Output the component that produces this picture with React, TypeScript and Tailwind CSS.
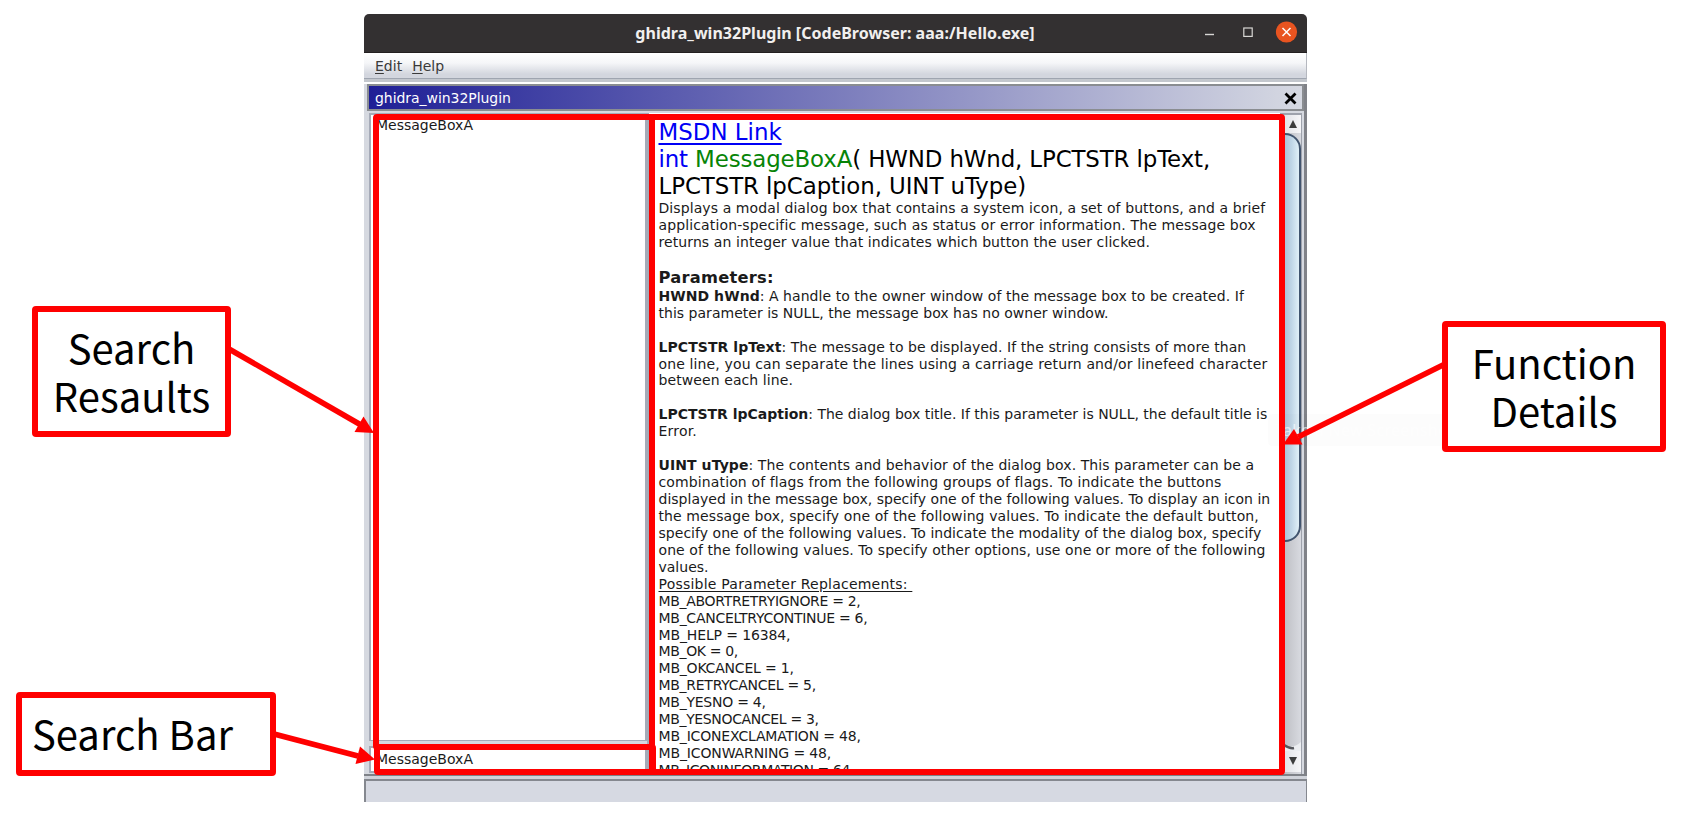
import type { ReactNode } from "react";

const constants = [
  { text: "MB_ABORTRETRYIGNORE = 2,", tracking: "tracking-[-0.31px]" },
  { text: "MB_CANCELTRYCONTINUE = 6,", tracking: "tracking-[-0.27px]" },
  { text: "MB_HELP = 16384,", tracking: "tracking-[-0.13px]" },
  { text: "MB_OK = 0,", tracking: "tracking-[-0.35px]" },
  { text: "MB_OKCANCEL = 1,", tracking: "tracking-[-0.2px]" },
  { text: "MB_RETRYCANCEL = 5,", tracking: "tracking-[-0.28px]" },
  { text: "MB_YESNO = 4,", tracking: "tracking-[-0.25px]" },
  { text: "MB_YESNOCANCEL = 3,", tracking: "tracking-[-0.35px]" },
  { text: "MB_ICONEXCLAMATION = 48,", tracking: "tracking-[-0.18px]" },
  { text: "MB_ICONWARNING = 48,", tracking: "tracking-[-0.13px]" },
  { text: "MB_ICONINFORMATION = 64,", tracking: "tracking-[-0.4px]" },
];

function Callout({ className, children }: { className: string; children: ReactNode }) {
  return (
    <div
      className={
        "relative z-10 flex shrink-0 items-center rounded-[4px] border-[6px] border-[#ff0000] bg-white font-['Noto_Sans_CJK_SC','Noto_Sans',sans-serif] text-[40px] leading-[48px] text-black " +
        className
      }
    >
      {children}
    </div>
  );
}

function Arrows() {
  return (
    <svg className="pointer-events-none absolute left-0 top-0 z-20 h-[818px] w-[1681px]" viewBox="0 0 1681 818">
      <g stroke="#f00" strokeWidth="5.6" fill="none">
        <path d="M229 349L361 425" />
        <path d="M274 734L358 756" />
        <path d="M1445 364L1298 437" />
      </g>
      <g fill="#f00">
        <path d="M374 433L354.500 432L363.500 416.500Z" />
        <path d="M375 759.500L355.500 764L360 746.500Z" />
        <path d="M1283 444.500L1294 429L1302.500 444.500Z" />
      </g>
    </svg>
  );
}

function Line({ children, className = "" }: { children?: ReactNode; className?: string }) {
  return <div className={"h-[16.95px] whitespace-pre " + className}>{children}</div>;
}

export default function App() {
  return (
    <div className="relative flex h-[818px] w-[1681px] overflow-hidden bg-white font-['DejaVu_Sans',sans-serif]">
      <div className="flex w-[364px] shrink-0 flex-col">
        <Callout className="ml-8 mt-[306px] h-[131px] w-[199px] justify-center pb-[1px] text-center">
          Search
          <br />
          Resaults
        </Callout>
        <Callout className="ml-4 mt-[255px] h-[84px] w-[260px] pb-[3px] pl-[10px]">Search Bar</Callout>
      </div>

      <div className="mt-[14px] flex h-[788px] w-[943px] shrink-0 flex-col">
        <div className="relative flex h-[39px] shrink-0 items-center justify-center rounded-t-[5px] border-b border-[#231f20] bg-[#333031]">
          <span className="whitespace-nowrap pr-[1px] font-['Noto_Sans',sans-serif] text-[16px] font-bold tracking-[0.02px] text-[#f1efee]">
            ghidra_win32Plugin [CodeBrowser: aaa:/Hello.exe]
          </span>
          <svg className="absolute right-0 top-0 h-[38px] w-[123px]" viewBox="1184 14 123 38">
            <path d="M1205 34.500H1214" stroke="#d8d6d4" strokeWidth="1.400" />
            <rect x="1243.800" y="28" width="8.400" height="8.400" fill="none" stroke="#d8d6d4" strokeWidth="1.200" />
            <circle cx="1286.500" cy="32" r="10.600" fill="#e95420" />
            <path d="M1282.500 28L1290.500 36M1290.500 28L1282.500 36" stroke="#fff" strokeWidth="1.500" />
          </svg>
        </div>

        <div className="flex h-[26px] shrink-0 items-center gap-[10px] border-b border-r border-b-[#9fa5b0] border-r-[#b5b8bf] bg-linear-to-b from-white via-[#f5f6f8] via-40% to-[#d3d6de] to-85% pl-[11px] pt-[1px] text-[14px] text-[#3a3a3a]">
          <span><u className="underline-offset-2">E</u>dit</span>
          <span><u className="underline-offset-2">H</u>elp</span>
        </div>
        <div className="h-[3px] shrink-0 bg-[#c3c7cd]" />
        <div className="h-[2px] shrink-0 bg-white" />

        <div className="flex h-[692px] shrink-0 flex-col border-b-2 border-r-[3px] border-b-[#7f8288] border-r-[#808288] bg-[#d6d9e0] pl-[3px]">
          <div className="flex h-[27px] shrink-0 items-center justify-between border-2 border-[#8a8d91] bg-linear-to-r/srgb from-[#1f1f96] to-[#d6d9e2] pl-[6px] pr-[5px] pt-[1px] text-[14px] tracking-[-0.05px] text-white">
            <span>ghidra_win32Plugin</span>
            <svg className="h-[13px] w-[13px]" viewBox="0 0 13 13">
              <path d="M1.500 1.500L11.500 11.500M11.500 1.500L1.500 11.500" stroke="#000" strokeWidth="2.800" />
            </svg>
          </div>
          <div className="ml-[2px] mt-[2px] flex h-[661px] shrink-0 text-[14px] leading-[16.95px] text-[#1a1a1a]">
            <div className="flex w-[278px] shrink-0 flex-col">
              <div className="h-[628px] shrink-0 border-2 border-b border-[#a6abb8] bg-white pl-[5px] pt-[2px]">MessageBoxA</div>
              <div className="mt-[5px] h-[27px] shrink-0 border-2 border-[#a6abb8] bg-white pl-[5px] pt-[3px]">MessageBoxA</div>
            </div>
            <div className="h-[660px] w-[633px] shrink-0 overflow-hidden border-l-2 border-[#a6abb8] bg-white pl-[9.500px] pt-[6px]">
              <div className="text-[22.900px] leading-[27px] text-black">
                <div className="w-fit text-[#0000f5] underline decoration-[1.500px] underline-offset-[3px]">MSDN Link</div>
                <div className="whitespace-pre tracking-[-0.13px]">
                  <span className="text-[#0000f5]">int</span> <span className="text-[#078407]">MessageBoxA</span>( HWND hWnd, LPCTSTR lpText,
                </div>
                <div className="whitespace-pre tracking-[-0.08px]">LPCTSTR lpCaption, UINT uType)</div>
              </div>
              <Line className="tracking-[0.09px]">Displays a modal dialog box that contains a system icon, a set of buttons, and a brief</Line>
              <Line className="tracking-[0.13px]">application-specific message, such as status or error information. The message box</Line>
              <Line className="tracking-[0.09px]">returns an integer value that indicates which button the user clicked.</Line>
              <Line />
              <div className="h-[20px] text-[16.300px] font-bold leading-[20.500px] tracking-[0.25px]">Parameters:</div>
              <Line className="tracking-[0.05px]"><b>HWND hWnd</b>: A handle to the owner window of the message box to be created. If</Line>
              <Line className="tracking-[0.02px]">this parameter is NULL, the message box has no owner window.</Line>
              <Line />
              <Line className="tracking-[0.065px]"><b>LPCTSTR lpText</b>: The message to be displayed. If the string consists of more than</Line>
              <Line className="tracking-[0.135px]">one line, you can separate the lines using a carriage return and/or linefeed character</Line>
              <Line className="tracking-[0.09px]">between each line.</Line>
              <Line />
              <Line className="tracking-[-0.01px]"><b>LPCTSTR lpCaption</b>: The dialog box title. If this parameter is NULL, the default title is</Line>
              <Line className="tracking-[0.2px]">Error.</Line>
              <Line />
              <Line className="tracking-[0.08px]"><b>UINT uType</b>: The contents and behavior of the dialog box. This parameter can be a</Line>
              <Line className="tracking-[0.13px]">combination of flags from the following groups of flags. To indicate the buttons</Line>
              <Line className="tracking-[0.01px]">displayed in the message box, specify one of the following values. To display an icon in</Line>
              <Line className="tracking-[0.1px]">the message box, specify one of the following values. To indicate the default button,</Line>
              <Line className="tracking-[0.03px]">specify one of the following values. To indicate the modality of the dialog box, specify</Line>
              <Line className="tracking-[0.075px]">one of the following values. To specify other options, use one or more of the following</Line>
              <Line>values.</Line>
              <Line className="tracking-[0.22px] underline underline-offset-2">{"Possible Parameter Replacements: "}</Line>
              {constants.map((c) => (
                <Line key={c.text} className={c.tracking}>{c.text}</Line>
              ))}
            </div>
            <div className="flex w-[22px] shrink-0 flex-col border-r border-t-2 border-[#9ea2ac] bg-linear-to-r from-[#b8b9be] to-[#d8dae0]">
              <div className="flex h-[18px] shrink-0 items-center justify-end bg-linear-to-r from-[#dcdee3] to-[#f6f6f8] pr-[4px]">
                <svg className="h-2 w-2" viewBox="0 0 8 8"><path d="M0 8L4 0L8 8Z" fill="#3c3c3c" /></svg>
              </div>
              <div className="h-[409px] shrink-0 rounded-r-[16px] border-2 border-l-0 border-[#41546e] bg-linear-to-r from-[#9fb8cf] via-[#bfd5e6] via-60% to-[#e0f0f8]" />
              <div className="h-[209px] shrink-0 overflow-hidden">
                <svg className="mt-[200px] h-[9px] w-[21px]" viewBox="0 0 21 9">
                  <path d="M4 4Q15 6 21 0V9H4Z" fill="#eceef1" />
                  <path d="M4 3Q10 7 14 6" stroke="#55575c" strokeWidth="2.500" fill="none" />
                </svg>
              </div>
              <div className="flex h-[21px] shrink-0 items-center justify-end bg-linear-to-r from-[#dcdee3] to-[#f6f6f8] pb-[1px] pr-[4px]">
                <svg className="h-2 w-2" viewBox="0 0 8 8"><path d="M0 0L4 8L8 0Z" fill="#3c3c3c" /></svg>
              </div>
            </div>
          </div>
        </div>
        <div className="h-[3px] shrink-0 bg-[#d0d3da]" />
        <div className="h-[23px] shrink-0 border-l-2 border-r border-t-2 border-[#85888f] bg-[#d6d9e2]" />
      </div>

      <div className="w-[374px] shrink-0">
        <Callout className="ml-[135px] mt-[321px] h-[131px] w-[224px] justify-center pb-[2px] text-center">
          Function
          <br />
          Details
        </Callout>
      </div>

      <div className="pointer-events-none absolute left-[1268px] top-[414px] h-[32px] w-[188px] whitespace-nowrap rounded bg-black/[0.012] pl-[7px] font-['Noto_Sans',sans-serif] text-[16px] leading-[32px] tracking-[0.3px] text-white/60">
        Take a New Screenshot
      </div>
      <div className="pointer-events-none absolute left-[373px] top-[114px] h-[636px] w-[282px] rounded-[4px] border-[6px] border-[#ff0000]" />
      <div className="pointer-events-none absolute left-[374px] top-[744px] h-[31px] w-[282px] rounded-[4px] border-[6px] border-[#ff0000]" />
      <div className="pointer-events-none absolute left-[649px] top-[114px] h-[661px] w-[636px] rounded-[4px] border-[6px] border-[#ff0000]" />
      <Arrows />
    </div>
  );
}
